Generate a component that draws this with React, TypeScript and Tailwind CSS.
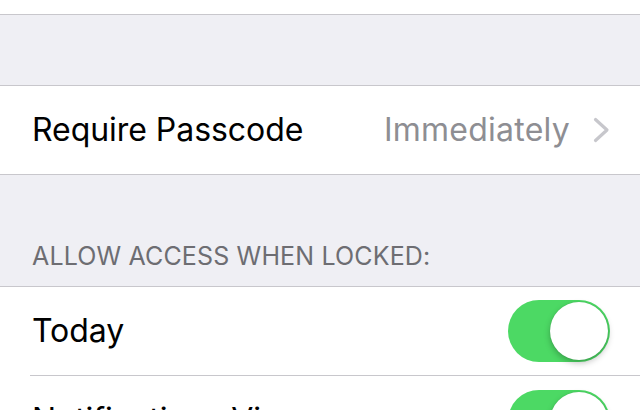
import React from "react";

function Toggle() {
  return (
    <div className="relative w-[102px] h-[62px] rounded-full bg-[#4cd964] shrink-0">
      <div className="absolute right-[2px] top-[2px] w-[58px] h-[58px] rounded-full bg-white shadow-[0_3px_6px_rgba(0,0,0,0.25),0_0_1px_rgba(0,0,0,0.2)]" />
    </div>
  );
}

export default function App() {
  return (
    <div
      className="w-[640px] h-[410px] overflow-hidden bg-[#efeff4]"
      style={{ fontFamily: "Inter, 'Noto Sans', sans-serif" }}
    >
      <div className="h-[15px] bg-white border-b border-[#c8c7cc]" />
      <div className="h-[71px] border-b border-[#c8c7cc]" />
      <div className="h-[89px] bg-white border-b border-[#c8c7cc] flex items-center pl-[32px] pr-[30px]">
        <span className="text-[32px] text-black tracking-[-0.05px] flex-1">Require Passcode</span>
        <span className="text-[32px] text-[#8e8e93] tracking-[0.25px]">Immediately</span>
        <svg className="ml-[23px]" width="17" height="26" viewBox="0 0 17 26">
          <path d="M2.5 2.5 L14 13 L2.5 23.5" fill="none" stroke="#c7c7cc" strokeWidth="3.2" strokeLinecap="round" strokeLinejoin="round" />
        </svg>
      </div>
      <div className="h-[112px] border-b border-[#c8c7cc] flex items-end pl-[32px] pb-[17px]">
        <span className="text-[25px] leading-none text-[#6d6d72] tracking-[0.15px]">ALLOW ACCESS WHEN LOCKED:</span>
      </div>
      <div className="bg-white">
        <div className="ml-[30px] h-[89px] flex items-center pl-[2px] pr-[30px] border-b border-[#c8c7cc]">
          <span className="text-[32px] text-black tracking-[-0.05px] flex-1">Today</span>
          <Toggle />
        </div>
        <div className="ml-[30px] h-[89px] flex items-start pt-[14px] pl-[2px] pr-[30px]">
          <span className="text-[32px] text-black tracking-[-0.05px] flex-1 mt-[6px]">Notifications View</span>
          <Toggle />
        </div>
      </div>
    </div>
  );
}
